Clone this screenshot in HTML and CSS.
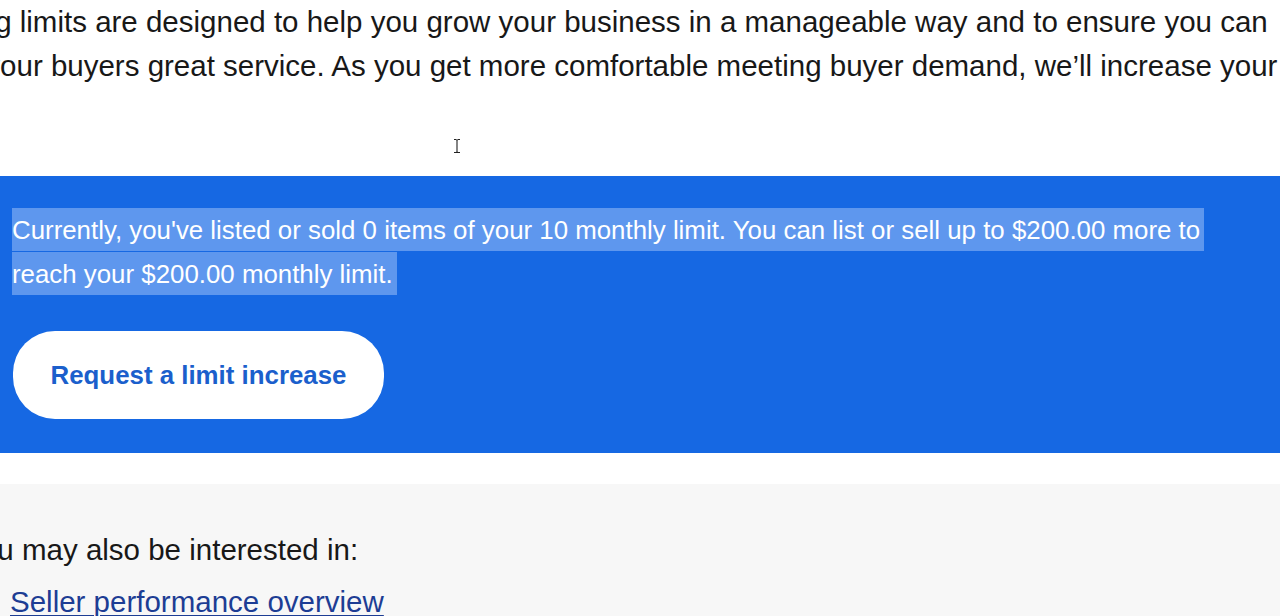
FILE: index.html
```html
<!DOCTYPE html>
<html>
<head>
<meta charset="utf-8">
<link rel="stylesheet" href="styles.css">
</head>
<body>
<div class="page">
  <section class="intro">
    <p class="intro-text">Selling limits are designed to help you grow your business in a manageable way and to ensure you can<br>give your buyers great service. As you get more comfortable meeting buyer demand, we’ll increase your limits.</p>
    <svg class="cursor" width="8" height="16" viewBox="0 0 8 16"><path d="M1 1.5h2.2M4.8 1.5H7M4 2v12M1 14.5h2.2M4.8 14.5H7M3 1.5q1 0 1 1M5 1.5q-1 0-1 1M3 14.5q1 0 1-1M5 14.5q-1 0-1-1" stroke="#222" stroke-width="1.1" fill="none"/></svg>
  </section>
  <section class="limit">
    <p class="limit-text"><span class="sel">Currently, you've listed or sold 0 items of your 10 monthly limit. You can list or sell up to $200.00 more to reach your $200.00 monthly limit.</span></p>
    <a class="btn" href="#">Request a limit increase</a>
  </section>
  <div class="gap"></div>
  <section class="more">
    <p class="more-title">You may also be interested in:</p>
    <a class="more-link" href="#">Seller performance overview</a>
  </section>
</div>
</body>
</html>
```

FILE: styles.css
```css
html, body {
  margin: 0;
  padding: 0;
  background: #f7f7f7;
  overflow: hidden;
}
.page {
  font-family: "Liberation Sans", Arial, sans-serif;
  font-size: 29.5px;
  line-height: 44px;
  color: #181818;
  width: 1280px;
  overflow: hidden;
}
.intro {
  background: #fff;
  position: relative;
  padding: 0 0 88px 0;
  border-top: 1px solid #e6e6e6;
  margin-top: -1px;
}
.intro-text {
  margin: 0 0 0 -77px;
  white-space: nowrap;
}
.cursor {
  position: absolute;
  left: 453px;
  top: 138px;
}
.limit {
  background: #1668e3;
  padding: 31px 12px 34px 12px;
  display: flex;
  flex-direction: column;
  align-items: flex-start;
  gap: 36px;
  font-size: 25.85px;
}
.limit-text {
  margin: 0;
  width: 1205px;
  color: #fff;
}
.sel {
  background: #5e97ee;
  padding: 7.5px 4px 7.5px 0;
  -webkit-box-decoration-break: clone;
  box-decoration-break: clone;
}
.btn {
  display: flex;
  align-items: center;
  justify-content: center;
  box-sizing: border-box;
  width: 371px;
  height: 88px;
  margin-left: 1px;
  border-radius: 42px;
  background: #fff;
  color: #1b5fcc;
  font-weight: bold;
  text-decoration: none;
}
.gap {
  height: 31px;
  background: #fff;
}
.more {
  padding: 44px 0 0 0;
  display: flex;
  flex-direction: column;
  align-items: flex-start;
  gap: 8px;
}
.more-title {
  margin: 0 0 0 -36px;
  color: #181818;
}
.more-link {
  margin-left: 10px;
  color: #1d3d94;
  text-decoration: underline;
  text-underline-offset: 3px;
  text-decoration-thickness: 2px;
}
```
